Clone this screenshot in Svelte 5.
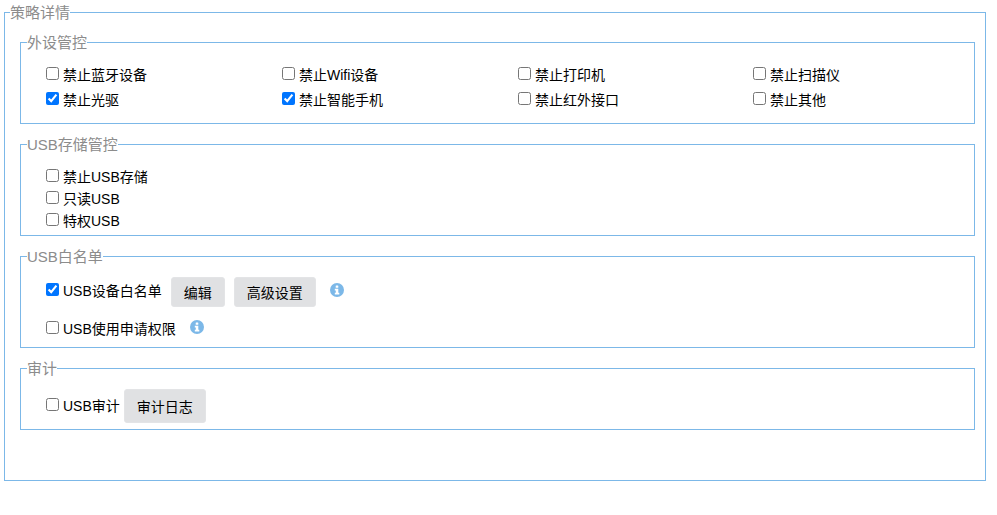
<script>
    const devices = [
        { label: '禁止蓝牙设备', checked: false },
        { label: '禁止Wifi设备', checked: false },
        { label: '禁止打印机', checked: false },
        { label: '禁止扫描仪', checked: false },
        { label: '禁止光驱', checked: true },
        { label: '禁止智能手机', checked: true },
        { label: '禁止红外接口', checked: false },
        { label: '禁止其他', checked: false }
    ];
    const storage = ['禁止USB存储', '只读USB', '特权USB'];
</script>

{#snippet info()}
    <svg class="info" width="14" height="14" viewBox="0 0 14 14">
        <circle cx="7" cy="7" r="7" fill="#7cb8e8" />
        <rect x="5.7" y="2.4" width="2.6" height="2.4" rx="0.5" fill="#fff" />
        <path d="M4.8 5.8h3.5v4h1v1.6H4.8V9.800h1V7.400h-1z" fill="#fff" />
    </svg>
{/snippet}

<fieldset class="outer">
    <legend>策略详情</legend>

    <fieldset class="group">
        <legend>外设管控</legend>
        <div class="device-grid">
            {#each devices as d}
                <label class="check"><input type="checkbox" checked={d.checked} />{d.label}</label>
            {/each}
        </div>
    </fieldset>

    <fieldset class="group">
        <legend>USB存储管控</legend>
        <div class="storage-list">
            {#each storage as s}
                <label class="check"><input type="checkbox" />{s}</label>
            {/each}
        </div>
    </fieldset>

    <fieldset class="group">
        <legend>USB白名单</legend>
        <div class="row whitelist">
            <label class="check"><input type="checkbox" checked />USB设备白名单</label>
            <button class="edit">编辑</button>
            <button class="advanced">高级设置</button>
            {@render info()}
        </div>
        <div class="row apply">
            <label class="check"><input type="checkbox" />USB使用申请权限</label>
            {@render info()}
        </div>
    </fieldset>

    <fieldset class="group">
        <legend>审计</legend>
        <div class="row audit">
            <label class="check"><input type="checkbox" />USB审计</label>
            <button class="log">审计日志</button>
        </div>
    </fieldset>
</fieldset>

<style>
    :global(body) {
        margin: 0;
        background: #fff;
        font-family: "Liberation Sans", "Noto Sans CJK SC", sans-serif;
        font-size: 14px;
        color: #000;
    }

    fieldset {
        border: 1px solid #7cb8e8;
        min-width: 0;
    }

    legend {
        padding: 0;
        font-size: 15px;
        height: 20px;
        line-height: 22px;
        color: #8c8c8c;
    }

    .outer {
        margin: 2px 11px 0 4px;
        padding: 10px 10px 50px 15px;
        height: 479px;
        box-sizing: border-box;
    }

    .outer > legend {
        margin-left: -10px;
    }

    .group {
        margin: 0;
        padding: 0;
    }

    .group + .group {
        margin-top: 10px;
    }

    .group > legend {
        margin-left: 6px;
    }

    .device-grid {
        display: grid;
        grid-template-columns: 236px 236px 235px 1fr;
        row-gap: 5px;
        padding: 13px 0 13px 25px;
    }

    .storage-list {
        display: flex;
        flex-direction: column;
        gap: 2px;
        padding: 13px 0 4px 25px;
    }

    .check {
        display: flex;
        align-items: center;
        height: 20px;
        line-height: 20px;
    }

    .check input {
        margin: 0 4px 3px 0;
        width: 13px;
        height: 13px;
    }

    .row {
        display: flex;
        align-items: center;
        padding-left: 25px;
    }

    .whitelist {
        padding-top: 11px;
        height: 30px;
    }

    .whitelist .check {
        margin-top: -2px;
    }

    .apply {
        margin-top: 12px;
        padding-bottom: 8px;
        height: 20px;
    }

    .audit {
        padding-top: 11px;
        padding-bottom: 6px;
    }

    button {
        height: 30px;
        padding: 0 12px;
        border: 1px solid #e3e4e6;
        border-radius: 3px;
        background: #e0e1e3;
        font: inherit;
        color: #000;
    }

    .edit {
        margin-left: 9px;
    }

    .advanced {
        margin-left: 9px;
    }

    .log {
        height: 34px;
        margin-left: 4px;
    }

    .info {
        margin-left: 14px;
        margin-top: -5px;
    }
</style>
